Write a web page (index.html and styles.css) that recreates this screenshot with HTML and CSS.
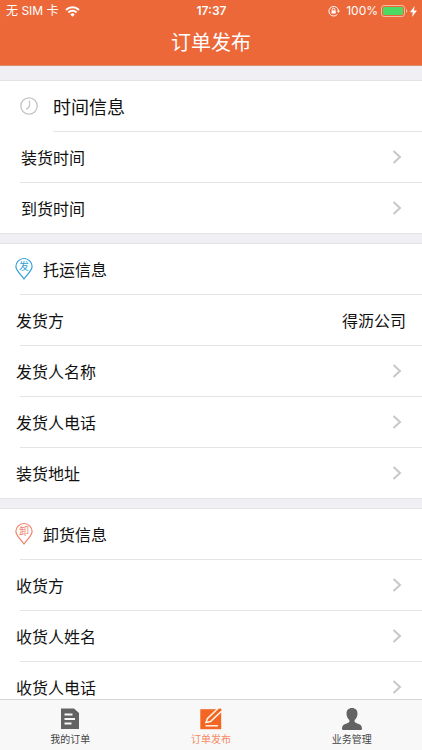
FILE: index.html
```html
<!DOCTYPE html>
<html lang="zh-CN">
<head>
<meta charset="utf-8">
<meta name="viewport" content="width=device-width, initial-scale=1">
<title>订单发布</title>
<link rel="stylesheet" href="styles.css">
</head>
<body>
<header class="header">
  <div class="status">
    <div class="status-side">
      <span>无 SIM 卡</span>
      <svg class="wifi" width="15" height="11" viewBox="0 0 15 11" fill="none" stroke="#fff" stroke-width="2"><path d="M1 4a9.2 9.2 0 0 1 13 0M3.4 6.5a5.8 5.8 0 0 1 8.2 0"/><path d="M7.5 10.7 5.3 8.4a3.1 3.1 0 0 1 4.4 0z" fill="#fff" stroke="none"/></svg>
    </div>
    <time class="clock">17:37</time>
    <div class="status-side status-right">
      <svg class="lock" width="12" height="12" viewBox="0 0 12 12" fill="none" stroke="#fff"><path d="M9.4 9.3A4.8 4.8 0 1 1 10.5 6"/><path d="M8.7 5.7h3.3L10.4 7.8z" fill="#fff" stroke="none"/><path d="M3.5 5.4h4.2v3.2H3.5z" fill="#fff" stroke="none"/><path d="M4.3 5.6V4.5a1.3 1.3 0 0 1 2.6 0v1.1"/></svg>
      <span>100%</span>
      <svg class="battery" width="26" height="12" viewBox="0 0 26 12"><rect x=".5" y=".5" width="23" height="11" rx="2.5" fill="none" stroke="#f7b9a0"/><rect x="2" y="2" width="20" height="8" rx="1" fill="#4cd964"/><path d="M25 4v4q1.3-.6 1.3-2T25 4z" fill="#f7b9a0"/></svg>
      <svg width="7" height="11" viewBox="0 0 7 11"><path d="M4.6 0 0 6.2h2.9L2 11l5-6.5H4z" fill="#fff"/></svg>
    </div>
  </div>
  <h1 class="title">订单发布</h1>
</header>

<main class="content">
  <section class="group group-time">
    <div class="row heading">
      <svg class="clock-icon" width="18" height="18" viewBox="0 0 18 18" fill="none" stroke="#c4c4c4" stroke-width="1.3"><circle cx="9" cy="9" r="8.2"/><path d="M9.5 3.5v5.8L6.3 12.5"/></svg>
      <h2>时间信息</h2>
    </div>
    <button class="row" type="button"><span>装货时间</span><svg class="chevron" width="10" height="14" viewBox="0 0 10 14"><path d="m1.5 1 6.5 6-6.5 6"/></svg></button>
    <button class="row" type="button"><span>到货时间</span><svg class="chevron" width="10" height="14" viewBox="0 0 10 14"><path d="m1.5 1 6.5 6-6.5 6"/></svg></button>
  </section>

  <section class="group">
    <div class="row heading">
      <span class="pin pin-send"><svg width="18" height="22" viewBox="0 0 18 22"><path d="M9 21C6.5 17.2.9 12.8.9 8.6a8.1 8.1 0 0 1 16.2 0C17.1 12.8 11.5 17.2 9 21z"/></svg><span>发</span></span>
      <h2>托运信息</h2>
    </div>
    <div class="row"><span>发货方</span><span class="value">得沥公司</span></div>
    <button class="row" type="button"><span>发货人名称</span><svg class="chevron" width="10" height="14" viewBox="0 0 10 14"><path d="m1.5 1 6.5 6-6.5 6"/></svg></button>
    <button class="row" type="button"><span>发货人电话</span><svg class="chevron" width="10" height="14" viewBox="0 0 10 14"><path d="m1.5 1 6.5 6-6.5 6"/></svg></button>
    <button class="row" type="button"><span>装货地址</span><svg class="chevron" width="10" height="14" viewBox="0 0 10 14"><path d="m1.5 1 6.5 6-6.5 6"/></svg></button>
  </section>

  <section class="group">
    <div class="row heading">
      <span class="pin pin-unload"><svg width="18" height="22" viewBox="0 0 18 22"><path d="M9 21C6.5 17.2.9 12.8.9 8.6a8.1 8.1 0 0 1 16.2 0C17.1 12.8 11.5 17.2 9 21z"/></svg><span>卸</span></span>
      <h2>卸货信息</h2>
    </div>
    <button class="row" type="button"><span>收货方</span><svg class="chevron" width="10" height="14" viewBox="0 0 10 14"><path d="m1.5 1 6.5 6-6.5 6"/></svg></button>
    <button class="row" type="button"><span>收货人姓名</span><svg class="chevron" width="10" height="14" viewBox="0 0 10 14"><path d="m1.5 1 6.5 6-6.5 6"/></svg></button>
    <button class="row" type="button"><span>收货人电话</span><svg class="chevron" width="10" height="14" viewBox="0 0 10 14"><path d="m1.5 1 6.5 6-6.5 6"/></svg></button>
  </section>
</main>

<nav class="tabs">
  <a class="tab" href="#orders">
    <svg width="22" height="22" viewBox="0 0 22 22"><path d="M2 .5h13l5 4.5v16H2z" fill="#636363"/><path d="M5.5 6.5h8M5.5 11h10.5M5.5 15.5h7" stroke="#f8f8f8" stroke-width="1.8"/></svg>
    <span>我的订单</span>
  </a>
  <a class="tab active" href="#publish" aria-current="page">
    <svg width="22" height="22" viewBox="0 0 22 22"><path d="M.3 1.2h20.9v20H.3z" fill="#f26522"/><path d="M18 0h4v4z" fill="#f8f8f8"/><path d="M18.5 0 7.5 10.5 6 14.5l4.5-1L21.800 2.800" fill="#f26522" stroke="#fff1e4" stroke-width="1.6"/><path d="m18 4 3-3" stroke="#f26522" stroke-width="2"/><path d="M5.500 17.800h12.500" stroke="#fff1e4" stroke-width="1.500"/></svg>
    <span>订单发布</span>
  </a>
  <a class="tab" href="#business">
    <svg width="22" height="22" viewBox="0 0 22 22"><path d="M11 0c3.6 0 5.5 2.3 5.5 5.5 0 2.8-1.2 5-2.8 6.500-.6 2 .4 2.700 2.600 3.400C19.500 16.400 21 17.500 21 20.500c0 1-.5 1.500-1.500 1.500h-17C1.500 22 1 21.500 1 20.500c0-3 1.500-4.100 4.700-5.100 2.200-.7 3.200-1.400 2.600-3.400C6.700 10.500 5.500 8.300 5.500 5.500 5.500 2.300 7.400 0 11 0z" fill="#636363"/></svg>
    <span>业务管理</span>
  </a>
</nav>
</body>
</html>
```
FILE: styles.css
```css
* { box-sizing: border-box; }

body {
  display: flex;
  flex-direction: column;
  height: 100vh;
  margin: 0;
  background: #efeff4;
  color: #111;
  font-family: Inter, "Noto Sans CJK SC", sans-serif;
  font-size: 16px;
}

svg { display: block; flex: none; overflow: visible; }

.header {
  flex: none;
  border-bottom: 1px solid #dc8b6c;
  background: #ec6839;
  color: #fff;
}

.status {
  display: grid;
  grid-template-columns: 1fr auto 1fr;
  align-items: center;
  height: 22px;
  padding: 0 5px 0 6px;
  font-size: 12px;
  line-height: 20px;
}

.status-side { display: flex; align-items: center; gap: 6px; }
.status-right { justify-content: flex-end; gap: 3px; }
.clock { font-weight: 600; }
.lock { margin-right: 3px; }

.title {
  margin: 0;
  padding-bottom: 1px;
  font-size: 20px;
  font-weight: 400;
  line-height: 42px;
  text-align: center;
}

.content {
  flex: 1;
  min-height: 0;
  overflow-y: auto;
  padding-top: 14px;
  scrollbar-width: none;
}

.group {
  margin-bottom: 9px;
  border-top: 1px solid #e2e2e5;
  background: #fff;
}

.row {
  position: relative;
  display: flex;
  align-items: center;
  justify-content: space-between;
  width: 100%;
  height: 51px;
  padding: 0 20px 2px 16px;
  border: 0;
  background: none;
  color: inherit;
  font: inherit;
  text-align: left;
}

.row::after {
  content: "";
  position: absolute;
  right: 0;
  bottom: 0;
  left: 20px;
  height: 1px;
  background: #e4e4e6;
}

.row:last-child::after { left: 0; }
.value { margin-right: -4px; }

.heading { justify-content: flex-start; gap: 10px; padding-left: 15px; }
.heading h2 { margin: 0; font-size: 16px; font-weight: 400; }

.group-time .row { padding-left: 21px; }
.group-time .heading { gap: 15px; padding-left: 20px; }
.group-time .heading h2 { font-size: 18px; }
.group-time .heading::after { left: 53px; }

.chevron { fill: none; stroke: #c7c7cc; stroke-width: 2; }

.pin { display: grid; justify-items: center; font-size: 10px; line-height: 17px; }
.pin > * { grid-area: 1 / 1; }
.pin path { fill: none; stroke: currentColor; stroke-width: 1.2; }
.pin-send { color: #2f9fd8; }
.pin-unload { color: #f0806a; }

.tabs {
  display: grid;
  grid-template-columns: repeat(3, 1fr);
  flex: none;
  height: 51px;
  border-top: 1px solid #d8d8d8;
  background: #f8f8f8;
}

.tab {
  display: flex;
  flex-direction: column;
  align-items: center;
  gap: 1px;
  padding-top: 8px;
  color: #444;
  font-size: 10px;
  line-height: 16px;
  text-decoration: none;
}

.tab.active { color: #f58a66; }
```
